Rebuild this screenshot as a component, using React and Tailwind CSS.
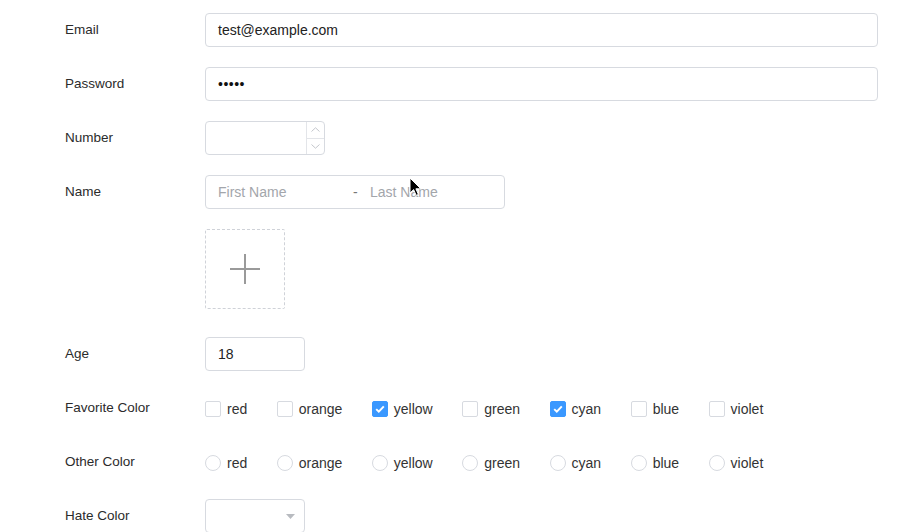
import { useState } from "react";

const colors = ["red", "orange", "yellow", "green", "cyan", "blue", "violet"];

function Row({ label, children }) {
  return (
    <div className="flex items-center">
      <div className="w-[140px] shrink-0 text-[13.5px] text-[#2b2b2b]">{label}</div>
      <div className="flex-1">{children}</div>
    </div>
  );
}

function CheckBox({ checked }) {
  return (
    <span
      className={
        "flex h-4 w-4 items-center justify-center rounded-[2px] border " +
        (checked ? "border-[#3a98ff] bg-[#3a98ff]" : "border-[#d7dae0] bg-white")
      }
    >
      {checked && (
        <svg width="10" height="8" viewBox="0 0 10 8" fill="none">
          <path d="M1.2 4.1 3.8 6.6 8.8 1.4" stroke="white" strokeWidth="2" />
        </svg>
      )}
    </span>
  );
}

function Radio() {
  return <span className="block h-4 w-4 rounded-full border border-[#d7dae0] bg-white" />;
}

export default function App() {
  const [picked] = useState(["yellow", "cyan"]);

  return (
    <div
      className="relative h-[532px] w-[921px] overflow-hidden bg-white pl-[65px] pr-[43px] pt-[13px]"
      style={{ fontFamily: '"Helvetica Neue", "Liberation Sans", Arial, sans-serif' }}
    >
      <div className="flex flex-col gap-5">
        <Row label="Email">
          <div className="flex h-[34px] items-center rounded border border-[#d7dae0] px-3 text-sm text-[#222]">
            test@example.com
          </div>
        </Row>

        <Row label="Password">
          <div className="flex h-[34px] items-center rounded border border-[#d7dae0] px-3 text-sm tracking-[0.5px] text-[#111]">
            •••••
          </div>
        </Row>

        <Row label="Number">
          <div className="flex h-[34px] w-[120px] rounded border border-[#d7dae0]">
            <div className="flex-1" />
            <div className="flex w-[18px] flex-col border-l border-[#e3e5e9]">
              <div className="flex flex-1 items-center justify-center border-b border-[#e3e5e9]">
                <svg width="9" height="5" viewBox="0 0 9 5" fill="none">
                  <path d="M0.5 4.5 4.5 0.8 8.5 4.5" stroke="#c3c6cc" strokeWidth="1" />
                </svg>
              </div>
              <div className="flex flex-1 items-center justify-center">
                <svg width="9" height="5" viewBox="0 0 9 5" fill="none">
                  <path d="M0.5 0.5 4.5 4.2 8.5 0.5" stroke="#c3c6cc" strokeWidth="1" />
                </svg>
              </div>
            </div>
          </div>
        </Row>

        <Row label="Name">
          <div className="flex h-[34px] w-[300px] items-center rounded border border-[#d7dae0] px-3 text-sm text-[#a3a6ab]">
            <span className="w-[135px]">First Name</span>
            <span className="w-[17px] text-[#777]">-</span>
            <span>Last Name</span>
          </div>
        </Row>

        <Row label="">
          <div className="mb-2 flex h-20 w-20 items-center justify-center rounded-[2px] border border-dashed border-[#cfd2d8]">
            <svg width="30" height="30" viewBox="0 0 30 30">
              <path d="M0 15H30M15 0V30" stroke="#9a9a9a" strokeWidth="2" />
            </svg>
          </div>
        </Row>

        <Row label="Age">
          <div className="flex h-[34px] w-[100px] items-center rounded border border-[#d7dae0] px-3 text-sm text-[#222]">
            18
          </div>
        </Row>

        <Row label="Favorite Color">
          <div className="flex h-[34px] items-center gap-x-[29.5px] pt-[2px] text-sm text-[#333]">
            {colors.map((c) => (
              <label key={c} className="flex items-center gap-[6px]">
                <CheckBox checked={picked.includes(c)} />
                <span>{c}</span>
              </label>
            ))}
          </div>
        </Row>

        <Row label="Other Color">
          <div className="flex h-[34px] items-center gap-x-[29.5px] pt-[2px] text-sm text-[#333]">
            {colors.map((c) => (
              <label key={c} className="flex items-center gap-[6px]">
                <Radio />
                <span>{c}</span>
              </label>
            ))}
          </div>
        </Row>

        <Row label="Hate Color">
          <div className="flex h-[34px] w-[100px] items-center justify-end rounded border border-[#d7dae0] pr-[9px]">
            <svg width="9" height="5" viewBox="0 0 9 5">
              <path d="M0 0H9L4.5 5Z" fill="#b8bbc0" />
            </svg>
          </div>
        </Row>
      </div>

      {/* mouse pointer */}
      <svg className="absolute left-[409px] top-[177px]" width="13" height="20" viewBox="0 0 13 20">
        <path d="M1 1V16L4.6 12.6 7.2 18.4 9.4 17.4 6.9 11.8H11.8Z" fill="black" stroke="white" strokeWidth="1" />
      </svg>
    </div>
  );
}
